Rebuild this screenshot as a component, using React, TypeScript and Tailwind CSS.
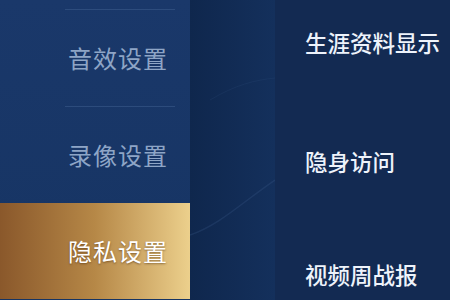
import React from 'react';

const LEFT_ITEMS = [
  { key: 'sound', label: '音效设置' },
  { key: 'record', label: '录像设置' },
];

const RIGHT_ITEMS = ['生涯资料显示', '隐身访问', '视频周战报'];

const cjk = { fontFamily: '"Noto Sans CJK SC", "Noto Sans", sans-serif' };

export default function App() {
  return (
    <div className="flex h-[300px] w-[450px] overflow-hidden bg-[#132a52]" style={cjk}>
      {/* left menu */}
      <div className="flex w-[190px] shrink-0 flex-col bg-gradient-to-b from-[#1a386a] to-[#163463]">
        <div className="h-[9px]" />
        {LEFT_ITEMS.map((item) => (
          <div key={item.key} className="flex flex-col">
            <div className="ml-[65px] h-px w-[110px] bg-[#3a5a8a]/60" />
            <div className="flex h-[96px] items-center justify-center pl-[46px] text-[24px] tracking-[1px] text-[#8ea5c6]">
              {item.label}
            </div>
          </div>
        ))}
        <div className="flex h-[96px] items-center justify-center bg-gradient-to-r from-[#8a582b] via-[#b68847] to-[#ecd08c] pl-[46px] text-[24px] tracking-[1px] text-white [text-shadow:0_1px_2px_rgba(60,30,0,0.5)]">
          隐私设置
        </div>
      </div>

      {/* divider strip with faint streak */}
      <div className="relative w-[85px] shrink-0 bg-gradient-to-r from-[#0f274d] to-[#14305c]">
        <svg className="absolute inset-0" width="85" height="300" viewBox="0 0 85 300">
          <path d="M0 235 C30 225 55 200 85 180" stroke="#3e5f90" strokeOpacity="0.25" strokeWidth="1.5" fill="none" />
          <path d="M20 100 C45 85 65 80 85 78" stroke="#3e5f90" strokeOpacity="0.15" strokeWidth="1" fill="none" />
        </svg>
      </div>

      {/* right options */}
      <div className="flex flex-1 flex-col pl-[30px] text-[22.5px] font-medium text-[#eef3fb]">
        <div className="mt-[27px] leading-[30px]">{RIGHT_ITEMS[0]}</div>
        <div className="mt-[89px] leading-[30px]">{RIGHT_ITEMS[1]}</div>
        <div className="mt-[83px] leading-[30px]">{RIGHT_ITEMS[2]}</div>
      </div>
    </div>
  );
}
